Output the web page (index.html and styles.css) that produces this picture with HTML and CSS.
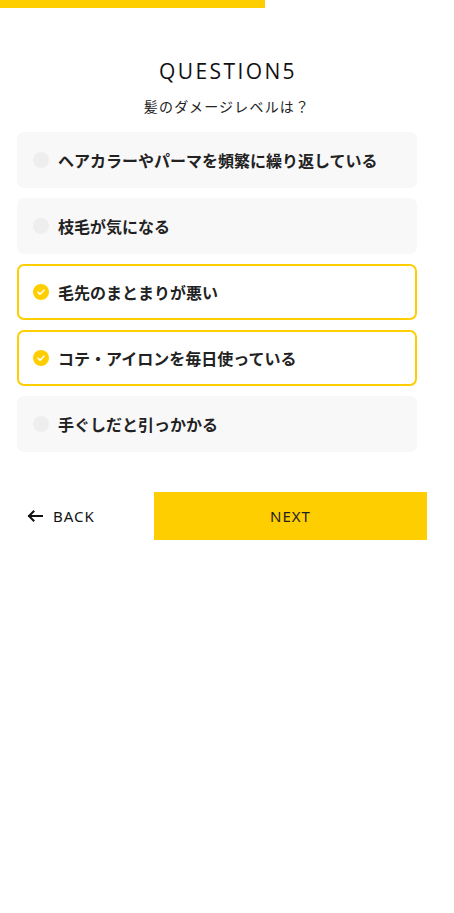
FILE: index.html
```html
<!DOCTYPE html>
<html lang="ja">
<head>
<meta charset="utf-8">
<link rel="stylesheet" href="styles.css">
</head>
<body>
<div class="progress"><div class="progress-fill" style="width:265px"></div></div>
<main class="quiz">
  <h1 class="q-title">QUESTION5</h1>
  <p class="q-sub">髪のダメージレベルは？</p>
  <ul class="options">
    <li class="option"><span class="radio"></span><span class="label">ヘアカラーやパーマを頻繁に繰り返している</span></li>
    <li class="option"><span class="radio"></span><span class="label">枝毛が気になる</span></li>
    <li class="option selected"><span class="radio"><svg viewBox="0 0 16 16" width="16" height="16"><path d="M5 8.2l2 2 4-4" fill="none" stroke="#fff" stroke-width="1.6" stroke-linecap="round" stroke-linejoin="round"/></svg></span><span class="label">毛先のまとまりが悪い</span></li>
    <li class="option selected"><span class="radio"><svg viewBox="0 0 16 16" width="16" height="16"><path d="M5 8.2l2 2 4-4" fill="none" stroke="#fff" stroke-width="1.6" stroke-linecap="round" stroke-linejoin="round"/></svg></span><span class="label">コテ・アイロンを毎日使っている</span></li>
    <li class="option"><span class="radio"></span><span class="label">手ぐしだと引っかかる</span></li>
  </ul>
  <div class="actions">
    <button class="back"><svg viewBox="0 0 16 12" width="16" height="12"><path d="M15 6H2M6.5 1.5L2 6l4.5 4.5" fill="none" stroke="#111" stroke-width="2" stroke-linecap="square"/></svg><span>BACK</span></button>
    <button class="next">NEXT</button>
  </div>
</main>
</body>
</html>
```
FILE: styles.css
```css
* { box-sizing: border-box; }
html, body { margin: 0; padding: 0; background: #fff; }
body { font-family: "Noto Sans CJK JP", "Noto Sans", sans-serif; color: #222; }
.progress { height: 8px; background: #fff; }
.progress-fill { height: 8px; background: #FFCE00; }
.quiz { padding-top: 49px; }
.q-title {
  margin: 0;
  text-align: center;
  font-family: "Open Sans", "Lato", sans-serif;
  font-weight: 400;
  font-size: 21px;
  letter-spacing: 2.4px;
  line-height: 28px;
  color: #111;
  padding-left: 2px;
}
.q-sub {
  margin: 11px 0 0;
  text-align: center;
  font-size: 14px;
  letter-spacing: 1.2px;
  line-height: 20px;
  color: #222;
}
.options {
  list-style: none;
  margin: 16px 0 0 17px;
  padding: 0;
  width: 400px;
  display: flex;
  flex-direction: column;
  gap: 10px;
}
.option {
  height: 56px;
  background: #F8F8F8;
  border-radius: 7px;
  border: 2px solid transparent;
  display: flex;
  align-items: center;
  padding-left: 14px;
  gap: 9px;
}
.option.selected { background: #fff; border-color: #FFCE00; }
.radio {
  width: 16px;
  height: 16px;
  border-radius: 50%;
  background: #EEEEEE;
  flex: none;
  display: flex;
}
.selected .radio { background: #FFCE00; }
.label {
  font-size: 16px;
  font-weight: 700;
  color: #222;
  line-height: 20px;
}
.actions {
  margin-top: 40px;
  padding: 0 27px;
  display: flex;
  align-items: center;
  justify-content: space-between;
}
.back {
  border: 0;
  background: none;
  padding: 0;
  display: flex;
  align-items: center;
  gap: 10px;
  font-family: "Noto Sans", sans-serif;
  font-weight: 400;
  font-size: 15px;
  letter-spacing: 1px;
  color: #111;
  cursor: pointer;
}
.next {
  width: 273px;
  height: 48px;
  border: 0;
  background: #FFCE00;
  font-family: "Noto Sans", sans-serif;
  font-weight: 400;
  font-size: 15px;
  letter-spacing: 1px;
  color: #222;
  cursor: pointer;
}
```
